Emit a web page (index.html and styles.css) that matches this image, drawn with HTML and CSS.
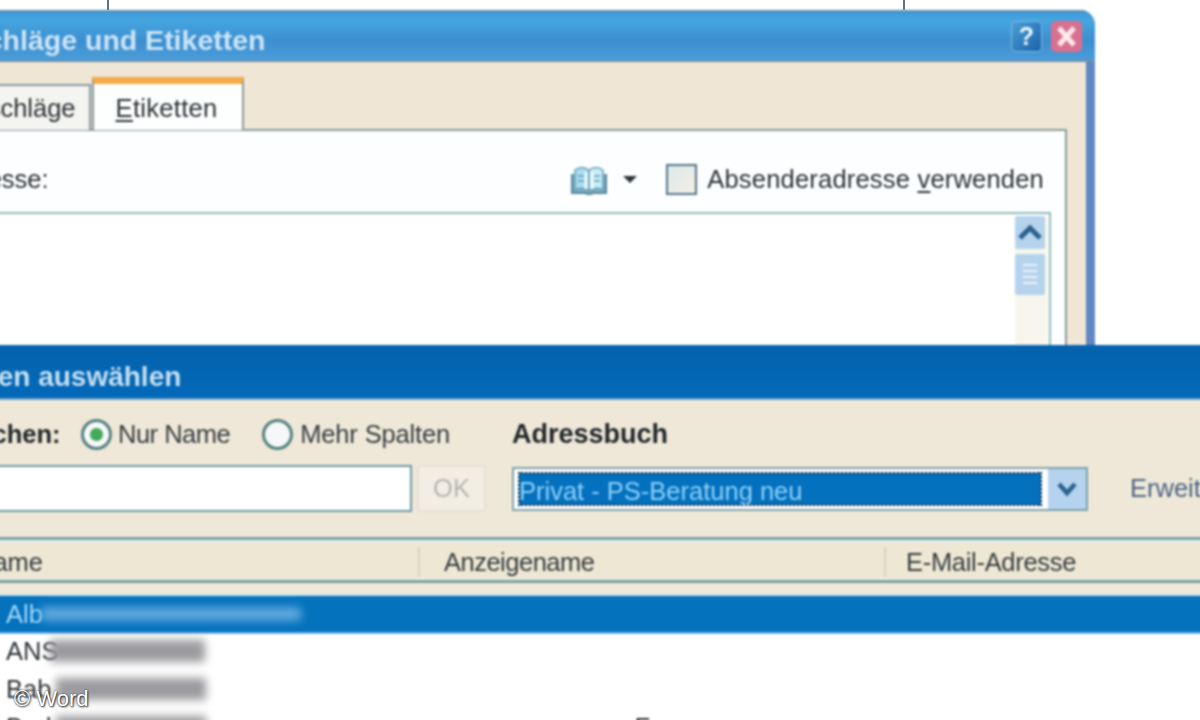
FILE: index.html
```html
<!DOCTYPE html>
<html lang="de">
<head>
<meta charset="utf-8">
<title>Umschläge und Etiketten</title>
<link rel="stylesheet" href="styles.css">
</head>
<body>
<main class="stage">
  <i class="tick tick-a"></i>
  <i class="tick tick-b"></i>

  <section class="win win-back">
    <header class="back-title">
      <h1 class="back-title-text">Umschläge und Etiketten</h1>
      <span class="cap-btn cap-help">?</span>
      <span class="cap-btn cap-close">
        <svg viewBox="0 0 31 31" width="31" height="31"><path d="M8 7 L23 24 M23 7 L8 24" stroke="#fbe9ee" stroke-width="5" fill="none"/></svg>
      </span>
    </header>
    <div class="back-body">
      <div class="tabs">
        <span class="tab">Umschläge</span>
        <span class="tab tab-on"><u>E</u>tiketten</span>
      </div>
      <div class="panel">
        <div class="addr-row">
          <span class="addr-label">Adresse:</span>
          <svg class="book" viewBox="0 0 36 30" width="36" height="30">
            <path d="M1 9 V28 H14 L18 29.5 L22 28 H35 V9" fill="#7fb0c6" stroke="#55859c" stroke-width="2"/>
            <path d="M4 5 Q11 0 18 5 V26 Q11 21 4 25 Z" fill="#a9dcef" stroke="#6a9db5" stroke-width="1.5"/>
            <path d="M32 5 Q25 0 18 5 V26 Q25 21 32 25 Z" fill="#c6ecf6" stroke="#6a9db5" stroke-width="1.5"/>
            <path d="M15 7 V24 M21 7 V24" stroke="#eefbff" stroke-width="3"/>
            <path d="M7 11 H13 M7 16 H13 M23 11 H29 M23 16 H29" stroke="#5f9fbb" stroke-width="1.5"/>
          </svg>
          <i class="drop-arrow"></i>
          <i class="check"></i>
          <span class="check-label">Absenderadresse <u>v</u>erwenden</span>
        </div>
        <div class="textbox">
          <div class="scroll">
            <span class="scroll-up">
              <svg viewBox="0 0 30 33" width="30" height="33"><path d="M5 22 L15 12 L25 22" stroke="#2d628f" stroke-width="5" fill="none"/></svg>
            </span>
            <span class="scroll-thumb">
              <svg viewBox="0 0 30 41" width="30" height="41"><path d="M8 11 H22 M8 17 H22 M8 23 H22 M8 29 H22" stroke="#eaf4fb" stroke-width="2"/></svg>
            </span>
          </div>
        </div>
      </div>
    </div>
  </section>

  <section class="win win-front">
    <h2 class="front-title">Namen auswählen</h2>
    <div class="controls">
      <div class="ctrl-row">
        <div class="ctrl-left">
          <b class="search-label">Suchen:</b>
          <i class="radio radio-on"></i><span class="radio-text text-nur">Nur Name</span>
          <i class="radio radio-two"></i><span class="radio-text text-mehr">Mehr Spalten</span>
        </div>
        <b class="book-label">Adressbuch</b>
      </div>
      <div class="ctrl-row ctrl-row-2">
        <div class="ctrl-left">
          <span class="search-input"></span>
          <span class="ok-btn">OK</span>
        </div>
        <div class="select">
          <span class="select-value">Privat - PS-Beratung neu</span>
          <span class="select-btn">
            <svg viewBox="0 0 38 40" width="38" height="40"><path d="M11 15 L19 24 L27 15" stroke="#2d628f" stroke-width="4.5" fill="none"/></svg>
          </span>
        </div>
        <span class="more-link">Erweitert</span>
      </div>
    </div>
    <div class="list-head">
      <span class="col col-1">Name</span>
      <span class="col col-2">Anzeigename</span>
      <span class="col col-3">E-Mail-Adresse</span>
    </div>
    <div class="list-gap"></div>
    <ul class="list">
      <li class="item item-on">Alb<span class="smear smear-on"></span></li>
      <li class="item">ANS<span class="smear smear-a"></span></li>
      <li class="item">Bab<span class="smear smear-b"></span></li>
      <li class="item">Bud<span class="smear smear-b"></span><span class="item-mid">Fe</span></li>
    </ul>
  </section>

  <span class="mark">© Word</span>
</main>
</body>
</html>
```
FILE: styles.css
```css
* { box-sizing: border-box; }
html, body { margin: 0; padding: 0; }
body { font-family: "Liberation Sans", Arial, sans-serif; color: #2c3236; }
.stage { position: relative; width: 1200px; height: 720px; overflow: hidden; background: #fff; font-size: 25.5px; }
.tick { position: absolute; top: 0; width: 2px; height: 10px; background: #5d7484; }
.tick-a { left: 107px; }
.tick-b { left: 903px; }
.win { position: absolute; left: -100px; filter: blur(0.9px); }
u { text-underline-offset: 3px; }

/* back window */
.win-back { top: 10px; width: 1195px; height: 400px; border-top-right-radius: 15px; background: #5f86c0; padding-right: 9px; overflow: hidden; }
.back-title { display: flex; align-items: center; height: 52px; margin-right: -9px; padding: 0 13px 0 25px; border-top: 2px solid #5e8fb4; border-bottom: 2px solid #6d8fb0; background: linear-gradient(#3f9ad8, #45a6e0 18%, #3d8ecf 60%, #4a9dda); }
.back-title-text { flex: 1; margin: 0; padding-top: 8px; font-size: 28.5px; font-weight: 700; color: #cbe5f7; }
.cap-btn { display: flex; align-items: center; justify-content: center; width: 31px; height: 31px; border-radius: 5px; margin-left: 9px; }
.cap-help { background: linear-gradient(135deg, #4d9ed8, #1a63a8); color: #e8f4fb; font-weight: 700; font-size: 25px; border: 1px solid #7dbbe5; }
.cap-close { background: #d9708f; }
.back-body { height: 340px; background: #efe6d5; padding: 15px 19px 0 29px; }
.tabs { display: flex; align-items: flex-end; height: 53px; }
.tab { display: flex; align-items: center; height: 46px; padding: 0 13px 0 17px; background: #f4f4f0; border: 2px solid #8b9a9c; border-bottom: 0; }
.tab-on { height: 53px; width: 152px; margin-left: 1px; padding: 3px 0 0 22px; background: #fdfefe; border-top: 7px solid #f5aa4a; letter-spacing: 0.3px; }
.panel { height: 300px; margin-top: -1px; background: #fdfeff; border: 2px solid #8b9a9c; border-bottom: 0; padding-left: 17px; }
.addr-row { display: flex; align-items: center; height: 81px; padding-top: 16px; }
.addr-label { flex: 1; }
.book { margin-right: 16px; }
.drop-arrow { width: 0; height: 0; border: 7px solid transparent; border-top-color: #2a3136; border-bottom: 0; margin-right: 29px; }
.check { width: 31px; height: 31px; margin-right: 10px; border: 2px solid #56768a; background: linear-gradient(135deg, #dce9ec, #f3efe3); }
.check-label { margin-right: 21px; letter-spacing: 0.2px; }
.textbox { display: flex; justify-content: flex-end; height: 240px; margin-right: 14px; background: #fff; border: 2px solid #8fbcb8; border-bottom: 0; padding: 2px 1px 0 0; }
.scroll { display: flex; flex-direction: column; gap: 5px; width: 33px; background: #f8f6ec; padding-right: 3px; }
.scroll-up, .scroll-thumb { display: block; height: 33px; background: #b6d3ee; border-radius: 2px; }
.scroll-thumb { height: 41px; }
.scroll svg { display: block; }

/* front window */
.win-front { top: 345px; width: 1400px; height: 375px; background: #efe8d8; }
.front-title { display: flex; align-items: center; height: 55px; margin: 0; padding: 10px 0 0 37px; font-size: 28px; font-weight: 700; color: #c5dff0; background: linear-gradient(#0562ad, #0269b9); border-bottom: 2px solid #6fa0c4; }
.controls { padding: 17px 0 0 60px; }
.ctrl-row { display: flex; align-items: center; height: 34px; }
.ctrl-row-2 { height: 47px; margin-top: 14px; }
.ctrl-left { display: flex; align-items: center; width: 552px; flex: none; height: 100%; }
.search-label { color: #20272b; width: 121px; flex: none; }
.radio { flex: none; width: 31px; height: 31px; border-radius: 50%; border: 3px solid #54827f; background: #f6f7f8; margin-right: 6px; }
.radio-on { background: radial-gradient(circle, #45ab5c 0 6px, #f6f7f8 7px); }
.radio-text { color: #353d41; }
.text-nur { letter-spacing: -0.5px; }
.text-mehr { letter-spacing: -0.15px; }
.radio-two { margin-left: 32px; margin-right: 7px; }
.book-label { color: #20272b; font-size: 27px; }
.search-input { width: 452px; height: 47px; background: #fff; border: 2px solid #6f9aa3; }
.ok-btn { display: flex; align-items: center; justify-content: center; width: 69px; height: 47px; margin-left: 5px; border: 2px solid #e4e1d6; border-radius: 4px; background: #f2eee3; color: #b5b5ae; }
.select { display: flex; align-items: center; justify-content: space-between; width: 576px; height: 44px; padding: 0 0 0 5px; background: #fff; border: 2px solid #7fa2aa; }
.select-value { display: block; width: 522px; height: 32px; padding-top: 2px; line-height: 32px; background: #0471be; outline: 2px dotted #0c2238; outline-offset: -1px; color: #8ed0f8; overflow: hidden; }
.select-btn { display: block; width: 38px; height: 40px; background: #b5d3ee; }
.select-btn svg { display: block; }
.more-link { margin-left: 42px; color: #4a6582; white-space: nowrap; }
.list-head { display: flex; align-items: center; height: 46px; margin-top: 25px; padding: 4px 0 0 49px; border-top: 3px solid #7f9ea3; border-bottom: 3px solid #7f9ea3; box-shadow: inset 0 2px 0 #dff5f5, inset 0 -2px 0 #e7f0e6; background: #eee7d3; }
.col { display: flex; align-items: center; height: 30px; padding-left: 26px; flex: none; color: #353d41; }
.col-1 { width: 469px; }
.col-2 { width: 466px; padding-left: 24px; border-left: 2px solid #d8d2c0; letter-spacing: -0.5px; }
.col-3 { border-left: 2px solid #d8d2c0; padding-left: 20px; letter-spacing: -0.3px; }
.list-gap { height: 13px; background: #eee9d9; border-bottom: 2px solid #bfe0ee; }
.list { list-style: none; margin: 0; padding: 0; background: #fff; height: 300px; }
.item { display: flex; align-items: center; height: 38px; padding: 0 0 4px 106px; }
.item-on { padding-bottom: 0; background: #0472bd; border-bottom: 2px solid #6fb2e6; color: #a2dafa; }
.smear { width: 150px; height: 22px; margin-left: 5px; filter: blur(4px); background: #9b9a9e; }
.smear-a { margin-left: -8px; width: 155px; }
.smear-on { width: 260px; height: 14px; margin-left: -2px; background: #5fa9dd; }
.item-mid { margin-left: 428px; }
.mark { position: absolute; left: 14px; top: 686px; color: #fff; font-size: 22px; text-shadow: 0 0 2px #333, 1px 1px 2px #333; }
```
